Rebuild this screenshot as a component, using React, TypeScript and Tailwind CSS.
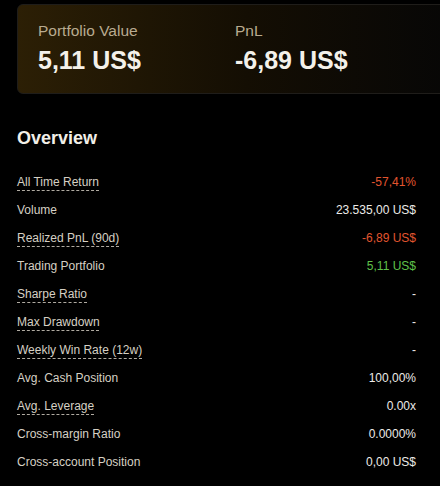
const rows: { label: string; value: string; dashed?: boolean; tone?: "red" | "green" }[] = [
  { label: "All Time Return", value: "-57,41%", dashed: true, tone: "red" },
  { label: "Volume", value: "23.535,00 US$" },
  { label: "Realized PnL (90d)", value: "-6,89 US$", dashed: true, tone: "red" },
  { label: "Trading Portfolio", value: "5,11 US$", tone: "green" },
  { label: "Sharpe Ratio", value: "-", dashed: true },
  { label: "Max Drawdown", value: "-", dashed: true },
  { label: "Weekly Win Rate (12w)", value: "-", dashed: true },
  { label: "Avg. Cash Position", value: "100,00%" },
  { label: "Avg. Leverage", value: "0.00x", dashed: true },
  { label: "Cross-margin Ratio", value: "0.0000%" },
  { label: "Cross-account Position", value: "0,00 US$" },
];

const toneClass = {
  red: "text-[#e2552f]",
  green: "text-[#5fc24a]",
};

export default function App() {
  return (
    <div
      className="w-[440px] h-[486px] overflow-hidden bg-black pt-[4px]"
      style={{ fontFamily: '"Liberation Sans", Arial, sans-serif' }}
    >
      {/* SUMMARY CARD */}
      <div className="ml-[17px] w-[460px] h-[90px] rounded-md border border-[#1f1d1a] bg-gradient-to-r from-[#2c1f05] via-[#140e03] to-[#060606] flex px-[20px] pt-[16px]">
        <div className="w-[197px]">
          <div className="text-[15.5px] leading-[20px] text-[#b9ab90]">Portfolio Value</div>
          <div className="mt-[4px] text-[25px] leading-[30px] font-semibold text-[#f4f1ea]">5,11 US$</div>
        </div>
        <div>
          <div className="text-[15.5px] leading-[20px] text-[#b9ab90]">PnL</div>
          <div className="mt-[4px] text-[25px] leading-[30px] font-semibold text-[#f4f1ea]">-6,89 US$</div>
        </div>
      </div>

      {/* OVERVIEW */}
      <h2 className="mt-[32px] ml-[17px] text-[18px] leading-[24px] font-bold text-[#f2efe8]">Overview</h2>

      <div className="mt-[18px] pl-[17px] pr-[24px]">
        {rows.map((r) => (
          <div key={r.label} className="h-[28px] flex items-center justify-between text-[12px]">
            <span
              className={
                r.dashed
                  ? "text-[#d6d0c4] underline decoration-dashed decoration-[#b0aba2] underline-offset-[4px]"
                  : "text-[#d6d0c4]"
              }
            >
              {r.label}
            </span>
            <span className={r.tone ? toneClass[r.tone] : "text-[#ecebe8]"}>{r.value}</span>
          </div>
        ))}
      </div>
    </div>
  );
}
